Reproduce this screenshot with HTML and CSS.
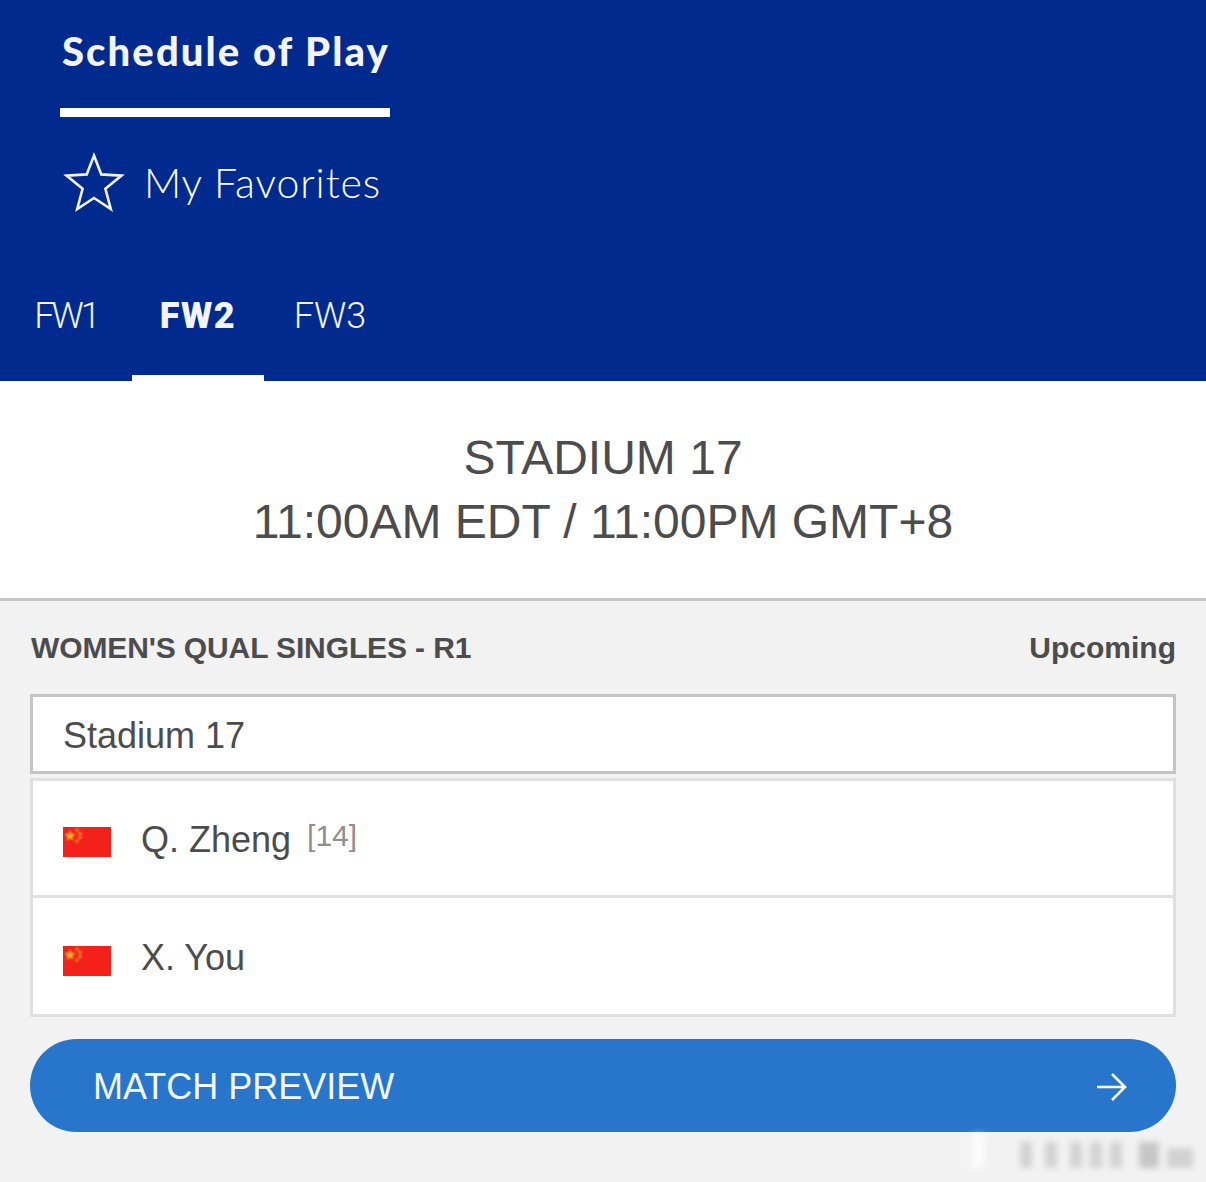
FILE: index.html
```html
<!DOCTYPE html>
<html lang="en">
<head>
  <meta charset="UTF-8" />
  <title>Schedule of Play</title>
  <link rel="stylesheet" href="styles.css">
</head>
<body>
  <header class="header">
    <div class="nav">
      <div class="nav-item active">Schedule of Play</div>
      <div class="nav-fav">
        <svg class="star" width="62" height="62" viewBox="0 0 62 62" fill="none" stroke="#f2f4fa" stroke-width="2.6">
          <path d="M31 4.5 L38.3 23.4 L58.5 24.6 L42.4 37.8 L47.8 58 L31 47 L14.2 58 L19.6 37.8 L3.5 24.6 L23.7 23.4 Z"/>
        </svg>
        <span>My Favorites</span>
      </div>
    </div>
    <div class="tabs">
      <div class="tab tab-tight">FW1</div>
      <div class="tab active">FW2</div>
      <div class="tab">FW3</div>
    </div>
  </header>

  <section class="court">
    <div>STADIUM 17</div>
    <div>11:00AM EDT / 11:00PM GMT+8</div>
  </section>

  <main class="content">
    <div class="match-head">
      <span class="round">WOMEN'S QUAL SINGLES - R1</span>
      <span class="status">Upcoming</span>
    </div>

    <div class="venue">Stadium 17</div>

    <div class="players">
      <div class="player player-top">
        <svg class="flag" width="48" height="30" viewBox="0 0 48 30">
          <rect width="48" height="30" fill="#f3211a"/>
          <g class="flag-stars">
            <path d="M7 3 L8.4 7 L12.6 7.1 L9.3 9.7 L10.5 13.7 L7 11.3 L3.5 13.7 L4.7 9.7 L1.4 7.1 L5.6 7 Z" fill="#f8c02c"/>
            <circle cx="14" cy="3" r="1.6" fill="#f0a020"/>
            <circle cx="17" cy="6.5" r="1.6" fill="#f0a020"/>
            <circle cx="17" cy="10.5" r="1.6" fill="#f0a020"/>
            <circle cx="14" cy="14" r="1.6" fill="#f0a020"/>
          </g>
        </svg>
        <span class="name">Q. Zheng</span>
        <span class="seed">[14]</span>
      </div>
      <div class="player player-bottom">
        <svg class="flag" width="48" height="30" viewBox="0 0 48 30">
          <rect width="48" height="30" fill="#f3211a"/>
          <g class="flag-stars">
            <path d="M7 3 L8.4 7 L12.6 7.1 L9.3 9.7 L10.5 13.7 L7 11.3 L3.5 13.7 L4.7 9.7 L1.4 7.1 L5.6 7 Z" fill="#f8c02c"/>
            <circle cx="14" cy="3" r="1.6" fill="#f0a020"/>
            <circle cx="17" cy="6.5" r="1.6" fill="#f0a020"/>
            <circle cx="17" cy="10.5" r="1.6" fill="#f0a020"/>
            <circle cx="14" cy="14" r="1.6" fill="#f0a020"/>
          </g>
        </svg>
        <span class="name">X. You</span>
      </div>
    </div>

    <div class="preview">
      <span>MATCH PREVIEW</span>
      <svg class="arrow" width="32" height="30" viewBox="0 0 32 30" fill="none" stroke="#fff" stroke-width="2.6">
        <path d="M1 15 H29 M16 2 L29 15 L16 28"/>
      </svg>
    </div>
  </main>

  <!-- blurred watermark, bottom right corner -->
  <div class="watermark">
    <i class="w1"></i><i class="w2"></i><i class="w3"></i><i class="w4"></i><i class="w5"></i><i class="w6"></i><i class="w7"></i><i class="w8"></i>
  </div>
</body>
</html>
```

FILE: styles.css
```css
* {
  margin: 0;
  padding: 0;
  box-sizing: border-box;
}
body {
  position: relative;
  width: 1206px;
  height: 1182px;
  overflow: hidden;
  background: #f2f2f2;
  font-family: 'Liberation Sans', Arial, sans-serif;
  color: #4c4c4c;
}
.header {
  height: 381px;
  background: #012a8e;
  color: #f2f4fa;
  font-family: 'Lato', sans-serif;
  display: flex;
  flex-direction: column;
}
.nav {
  width: 330px;
  margin-left: 60px;
}
.nav-item {
  height: 117px;
  padding: 26px 0 0 2px;
  border-bottom: 9px solid #fff;
  font-size: 40px;
  line-height: 50px;
  font-weight: 900;
  letter-spacing: 2.1px;
  white-space: nowrap;
}
.nav-fav {
  display: flex;
  align-items: center;
  gap: 19px;
  padding: 34px 0 0 3px;
  color: #fff;
  font-size: 41px;
  font-weight: 300;
  letter-spacing: .9px;
  white-space: nowrap;
}
.star {
  flex-shrink: 0;
}
.tabs {
  display: flex;
  margin-top: auto;
  height: 95px;
}
.tab {
  width: 132px;
  font-family: 'Roboto', sans-serif;
  font-size: 36px;
  font-weight: 300;
  line-height: 61px;
  text-align: center;
}
.tab-tight {
  letter-spacing: -3px;
}
.tab.active {
  font-weight: 900;
  letter-spacing: 1.5px;
  border-bottom: 6px solid #fff;
}
.court {
  height: 220px;
  background: #fff;
  border-bottom: 3px solid #c6c6c6;
  padding-top: 45px;
  font-size: 48px;
  line-height: 63.5px;
  text-align: center;
}
.content {
  padding: 0 30px;
}
.match-head {
  display: flex;
  justify-content: space-between;
  align-items: center;
  height: 93px;
  font-size: 30px;
  font-weight: bold;
}
.round {
  margin-left: 1px;
  letter-spacing: -.12px;
}
.venue {
  height: 80px;
  background: #fff;
  border: 3px solid #c4c4c4;
  padding-left: 30px;
  font-size: 36px;
  line-height: 77px;
}
.players {
  margin-top: 4px;
  background: #fff;
  border: 3px solid #e0e0e0;
}
.player {
  display: flex;
  align-items: center;
  padding-left: 30px;
  font-size: 36px;
}
.player-top {
  height: 114px;
  padding-top: 4px;
}
.player-top .flag {
  margin-top: 4px;
}
.player-bottom {
  height: 119px;
  padding-top: 4px;
  border-top: 3px solid #e0e0e0;
}
.flag {
  flex-shrink: 0;
  margin: 6px 30px 0 0;
}
.flag-stars {
  filter: blur(.8px);
}
.seed {
  margin-left: 16px;
  font-size: 30px;
  color: #8f8f8f;
  position: relative;
  top: -4px;
}
.preview {
  display: flex;
  justify-content: space-between;
  align-items: center;
  height: 93px;
  margin-top: 22px;
  padding: 2px 48px 0 63px;
  border-radius: 47px;
  background: #2776cc;
  color: #f4f8fc;
  font-size: 36px;
}
.watermark {
  position: absolute;
  left: 955px;
  top: 1130px;
  width: 250px;
  height: 45px;
  filter: blur(3px);
  opacity: .7;
}
.watermark i {
  position: absolute;
  top: 12px;
  width: 12px;
  height: 26px;
  background: #c4c4c4;
}
.watermark .w1 { left: 16px; top: 4px; width: 14px; height: 34px; background: #fff; }
.watermark .w2 { left: 65px; }
.watermark .w3 { left: 90px; }
.watermark .w4 { left: 115px; }
.watermark .w5 { left: 135px; }
.watermark .w6 { left: 155px; }
.watermark .w7 { left: 184px; width: 20px; background: #b4b4b4; }
.watermark .w8 { left: 212px; width: 26px; top: 18px; height: 20px; }
```
